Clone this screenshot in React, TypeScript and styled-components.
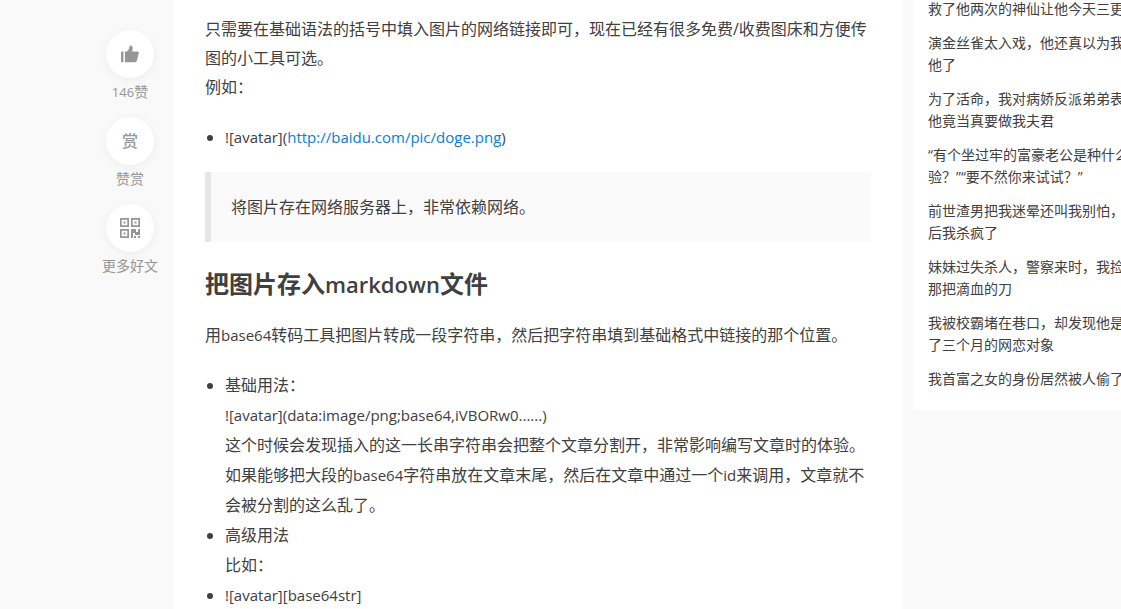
import React from "react";
import styled, { createGlobalStyle } from "styled-components";

const GlobalStyle = createGlobalStyle`
  *, *::before, *::after { box-sizing: border-box; }
  body {
    margin: 0;
    background: #f9f9f9;
    color: #404040;
    font-family: "Open Sans", "Noto Sans CJK SC", sans-serif;
    font-size: 16px;
    text-spacing-trim: space-all;
  }
`;

const Page = styled.div`
  display: grid;
  grid-template-columns: 173px minmax(0, 1fr) 218px;
  height: 100vh;
  overflow: hidden;
`;

const Rail = styled.nav`
  display: flex;
  flex-direction: column;
  align-items: center;
  gap: 15px;
  padding: 30px 0 0 87px;
`;

const RailItem = styled.div`
  display: flex;
  flex-direction: column;
  align-items: center;
  gap: 4px;
`;

const RoundButton = styled.button`
  display: flex;
  align-items: center;
  justify-content: center;
  width: 48px;
  height: 48px;
  padding: 0;
  border: 0;
  border-radius: 50%;
  background: #fff;
  box-shadow: 0 2px 10px rgba(0, 0, 0, 0.05);
  color: #969696;
  font: inherit;
  font-weight: 500;
  line-height: 20px;
  cursor: pointer;
`;

const RailLabel = styled.span`
  color: #969696;
  font-size: 14px;
  line-height: 20px;
  white-space: nowrap;
`;

const Article = styled.article`
  min-width: 0;
  padding: 15px 32px 0;
  background: #fff;
`;

const Paragraph = styled.p`
  margin: 0 0 20px;
  line-height: 29px;
`;

const List = styled.ul`
  margin: 0 0 20px;
  padding-left: 20px;
  line-height: 30px;
`;

const Link = styled.a`
  color: #0681d0;
  text-decoration: none;
`;

const Quote = styled.blockquote`
  margin: 0 0 20px;
  padding: 20px;
  border-left: 6px solid #e6e6e6;
  background: #fafafa;
  line-height: 30px;
`;

const Heading = styled.h2`
  margin: 0 0 15px;
  font-size: 24px;
  font-weight: 700;
  line-height: 44px;
`;

const latinSizes = { label: "13px", text: "15px", heading: "22px" };

const Latin = styled.span<{ $size?: keyof typeof latinSizes }>`
  font-size: ${({ $size = "text" }) => latinSizes[$size]};
  font-weight: ${({ $size }) => ($size === "heading" ? 600 : 400)};
  line-height: 1;
`;

const Aside = styled.aside`
  align-self: start;
  margin: -2px 0 0 10px;
  padding: 0 0 20px 15px;
  overflow: hidden;
  border-bottom-left-radius: 4px;
  background: #fff;
`;

const Stories = styled.ul`
  display: flex;
  flex-direction: column;
  gap: 12px;
  margin: 0;
  padding: 0;
  list-style: none;
`;

const StoryLink = styled.a`
  display: block;
  color: inherit;
  font-size: 14px;
  line-height: 22px;
  text-decoration: none;
  white-space: pre;
`;

const stories: string[][] = [
  ["救了他两次的神仙让他今天三更"],
  ["演金丝雀太入戏，他还真以为我", "他了"],
  ["为了活命，我对病娇反派弟弟表", "他竟当真要做我夫君"],
  ["“有个坐过牢的富豪老公是种什么", "验？”“要不然你来试试？”"],
  ["前世渣男把我迷晕还叫我别怕，", "后我杀疯了"],
  ["妹妹过失杀人，警察来时，我捡", "那把滴血的刀"],
  ["我被校霸堵在巷口，却发现他是", "了三个月的网恋对象"],
  ["我首富之女的身份居然被人偷了"],
];

const ThumbIcon = () => (
  <svg width="20" height="18" viewBox="0 0 20 18" fill="currentColor" aria-hidden="true">
    <path d="M1.9 6.5h1.5v10.700H1.900a.9.9 0 0 1-.9-.9V7.400a.9.9 0 0 1 .9-.9z" />
    <path d="M4.900 6.500h1.800C8.500 5.600 9.200 3.800 9.400 2c.1-1 .6-1.600 1.300-1.600 1.200 0 2 1.100 2 2.600 0 1.200-.2 2.300-.6 3.500h5.300c1 0 1.600.8 1.400 1.700l-1.900 7.200c-.3 1.100-1.100 1.800-2.200 1.800H4.900z" />
  </svg>
);

const QrIcon = () => (
  <svg width="20" height="20" viewBox="0 0 20 20" fill="none" stroke="currentColor" strokeWidth="1.700" aria-hidden="true">
    <path d="M.85.85h7.300v7.300H.85zM11.850.85h7.300v7.300h-7.300zM.85 11.850h7.300v7.300H.85z" />
    <path d="M3.500 3.500h2v2h-2zM14.500 3.500h2v2h-2zM3.500 14.500h2v2h-2zM11 11h5v3h2v-3h2v6h-5v-2h-2v5h-2zM14 18h2v2h-2zM18 18h2v2h-2z" fill="currentColor" stroke="none" />
  </svg>
);

export default function App() {
  return (
    <>
      <GlobalStyle />
      <Page>
        <Rail>
          <RailItem>
            <RoundButton aria-labelledby="rail-like"><ThumbIcon /></RoundButton>
            <RailLabel id="rail-like"><Latin $size="label">146</Latin>赞</RailLabel>
          </RailItem>
          <RailItem>
            <RoundButton aria-labelledby="rail-reward">赏</RoundButton>
            <RailLabel id="rail-reward">赞赏</RailLabel>
          </RailItem>
          <RailItem>
            <RoundButton aria-labelledby="rail-more"><QrIcon /></RoundButton>
            <RailLabel id="rail-more">更多好文</RailLabel>
          </RailItem>
        </Rail>
        <Article>
          <Paragraph>
            只需要在基础语法的括号中填入图片的网络链接即可，现在已经有很多免费/收费图床和方便传图的小工具可选。
            <br />
            例如：
          </Paragraph>
          <List>
            <li><Latin>![avatar](<Link href="#doge">http://baidu.com/pic/doge.png</Link>)</Latin></li>
          </List>
          <Quote>将图片存在网络服务器上，非常依赖网络。</Quote>
          <Heading>把图片存入<Latin $size="heading">markdown</Latin>文件</Heading>
          <Paragraph>
            用<Latin>base64</Latin>转码工具把图片转成一段字符串，然后把字符串填到基础格式中链接的那个位置。
          </Paragraph>
          <List>
            <li>
              基础用法：
              <br />
              <Latin>![avatar](data:image/png;base64,iVBORw0......)</Latin>
              <br />
              这个时候会发现插入的这一长串字符串会把整个文章分割开，非常影响编写文章时的体验。
              <br />
              如果能够把大段的<Latin>base64</Latin>字符串放在文章末尾，然后在文章中通过一个<Latin>id</Latin>来调用，文章就不会被分割的这么乱了。
            </li>
            <li>
              高级用法
              <br />
              比如：
            </li>
            <li><Latin>![avatar][base64str]</Latin></li>
          </List>
        </Article>
        <Aside>
          <Stories>
            {stories.map((lines) => (
              <li key={lines[0]}>
                <StoryLink href="#story">{lines.join("\n")}</StoryLink>
              </li>
            ))}
          </Stories>
        </Aside>
      </Page>
    </>
  );
}
